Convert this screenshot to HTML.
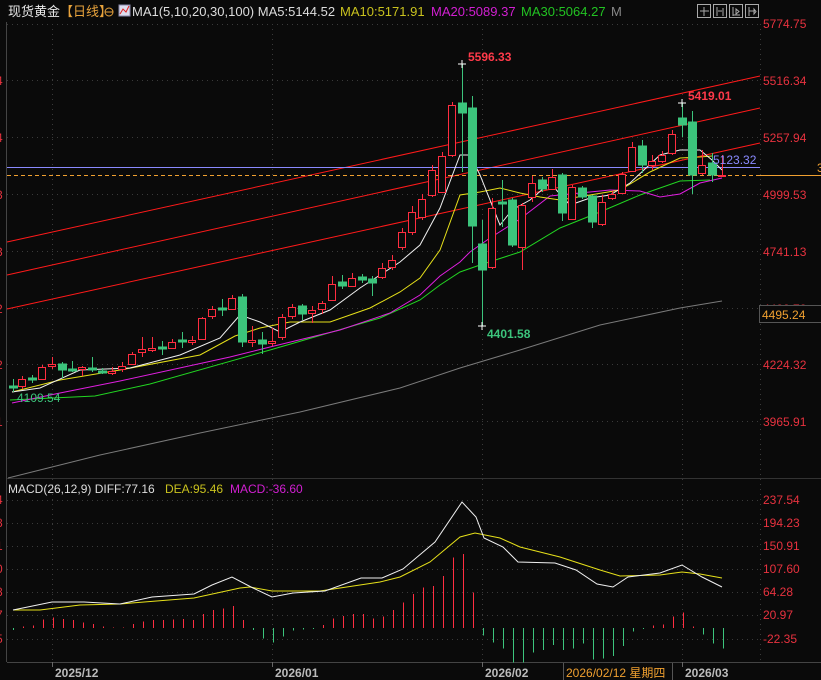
<!DOCTYPE html>
<html><head><meta charset="utf-8"><style>
html,body{margin:0;padding:0;background:#0a0a0a;width:821px;height:680px;overflow:hidden}
svg{display:block}
text{font-family:"Liberation Sans","Noto Sans CJK SC",sans-serif}
</style></head><body>
<svg width="821" height="680" viewBox="0 0 821 680" xmlns="http://www.w3.org/2000/svg">
<rect width="821" height="680" fill="#0a0a0a"/>
<g stroke="#3a3a3a" stroke-dasharray="1,4" stroke-width="1">
<line x1="7" y1="24.5" x2="760" y2="24.5"/><line x1="7" y1="80.5" x2="760" y2="80.5"/><line x1="7" y1="137.5" x2="760" y2="137.5"/><line x1="7" y1="194.5" x2="760" y2="194.5"/><line x1="7" y1="251.5" x2="760" y2="251.5"/><line x1="7" y1="308.5" x2="760" y2="308.5"/><line x1="7" y1="364.5" x2="760" y2="364.5"/><line x1="7" y1="421.5" x2="760" y2="421.5"/>
<line x1="7" y1="500.5" x2="760" y2="500.5"/><line x1="7" y1="523.5" x2="760" y2="523.5"/><line x1="7" y1="546.5" x2="760" y2="546.5"/><line x1="7" y1="569.5" x2="760" y2="569.5"/><line x1="7" y1="592.5" x2="760" y2="592.5"/><line x1="7" y1="615.5" x2="760" y2="615.5"/><line x1="7" y1="639.5" x2="760" y2="639.5"/>
<line x1="52.5" y1="24" x2="52.5" y2="662"/><line x1="272.5" y1="24" x2="272.5" y2="662"/><line x1="482.5" y1="24" x2="482.5" y2="662"/><line x1="682.5" y1="24" x2="682.5" y2="662"/><line x1="760.5" y1="24" x2="760.5" y2="662"/>
</g>
<line x1="6.5" y1="22" x2="6.5" y2="662" stroke="#444"/>
<line x1="7" y1="478.5" x2="821" y2="478.5" stroke="#333"/>
<line x1="7" y1="662.5" x2="821" y2="662.5" stroke="#444"/>

<text x="8" y="16" font-size="13" fill="#e8e8e8">现货黄金</text>
<text x="60" y="16" font-size="13" fill="#e8a33c">【日线】</text>
<circle cx="109" cy="12" r="4" fill="none" stroke="#e8a33c"/><line x1="105" y1="12" x2="113" y2="12" stroke="#e8a33c"/>
<rect x="119" y="5" width="11" height="11" fill="#dde" stroke="#88a"/><polyline points="120,14 123,9 126,12 129,6" fill="none" stroke="#d22"/>
<text x="132" y="16" font-size="13" fill="#ddd">MA1(5,10,20,30,100) MA5:5144.52</text>
<text x="340" y="16" font-size="13" fill="#c9c21e">MA10:5171.91</text>
<text x="431" y="16" font-size="13" fill="#d21fd2">MA20:5089.37</text>
<text x="521" y="16" font-size="13" fill="#22c322">MA30:5064.27</text>
<text x="611" y="16" font-size="13" fill="#888">M</text>
<g fill="none" stroke="#aaa">
<rect x="697.5" y="4.5" width="13" height="13"/><rect x="713.5" y="4.5" width="13" height="13"/><rect x="729.5" y="4.5" width="13" height="13"/><rect x="745.5" y="4.5" width="13" height="13"/>
<path d="M704 7v9M700 11h9M717 7v9M723 8v8M718 11h4M733 7v9M733 15h7M736 9v5l3-2.5zM749 7v9M749 11h6M754 9v5l2-2.5z"/>
</g>

<g font-size="12" fill="#e8323f">
<text x="763" y="28">5774.75</text><text x="763" y="85">5516.34</text><text x="763" y="142">5257.94</text><text x="763" y="199">4999.53</text><text x="763" y="256">4741.13</text><text x="763" y="313">4482.72</text><text x="763" y="369">4224.32</text><text x="763" y="426">3965.91</text>
<text x="763" y="504">237.54</text><text x="763" y="527">194.23</text><text x="763" y="550">150.91</text><text x="763" y="573">107.60</text><text x="763" y="596">64.28</text><text x="763" y="619">20.97</text><text x="763" y="643">-22.35</text>
<text x="-4" y="85">4</text><text x="-4" y="142">4</text><text x="-4" y="199">3</text><text x="-4" y="256">3</text><text x="-4" y="313">2</text><text x="-4" y="369">2</text><text x="-4" y="426">1</text>
<text x="-4" y="527">8</text><text x="-4" y="550">1</text><text x="-4" y="573">0</text><text x="-4" y="596">8</text><text x="-4" y="619">7</text><text x="-4" y="643">5</text><text x="-4" y="504">4</text>
</g>
<rect x="759.5" y="305.5" width="62" height="17" fill="#0a0a0a" stroke="#555"/>
<text x="762" y="319" font-size="12" fill="#f0a030">4495.24</text>

<g stroke="#ff1a1a" stroke-width="1">
<line x1="7" y1="242" x2="760" y2="76"/><line x1="7" y1="275" x2="760" y2="108"/><line x1="7" y1="309" x2="760" y2="143"/>
</g>
<line x1="7" y1="167.5" x2="760" y2="167.5" stroke="#8a8aff"/>
<line x1="7" y1="175.5" x2="760" y2="175.5" stroke="#f0a030" stroke-dasharray="4,3"/>
<line x1="760" y1="175.5" x2="821" y2="175.5" stroke="#f0a030"/>
<text x="817" y="172" font-size="12" fill="#f0a030">3</text>

<g fill="none" stroke-width="1">
<polyline stroke="#7a7a7a" points="8,478 100,455 200,433 300,412 400,388 460,368 520,350 600,325 680,308 722,301"/>
<polyline stroke="#22d622" points="10,400 95,396 150,384 270,350 380,318 420,300 440,285 460,272 480,265 520,252 560,228 600,212 640,195 680,181 710,180"/>
<polyline stroke="#e01fe0" points="12,403 60,393 120,381 230,357 270,347 340,330 390,313 420,295 440,276 460,262 470,252 490,238 520,219 550,196 580,193 610,190 640,191 660,197 680,194 700,183 722,178"/>
<polyline stroke="#e6e01a" points="12,392 60,380 120,370 200,355 235,336 260,328 290,322 330,322 370,308 400,292 420,278 440,250 460,195 480,192 500,188 520,193 540,197 560,200 590,195 620,190 650,172 680,158 700,157 712,156"/>
<polyline stroke="#f0f0f0" points="12,392 40,388 80,370 130,368 180,355 220,338 240,315 260,322 280,332 300,322 330,310 360,288 400,262 420,245 440,208 460,155 470,155 480,175 500,225 512,210 530,200 550,183 570,205 590,198 610,195 630,183 660,155 680,150 700,150 712,160 722,170"/>
</g>

<g stroke="#3cc47c" fill="#3cc47c">
<line x1="13.5" y1="379" x2="13.5" y2="392"/><rect x="9.5" y="386" width="8" height="2"/>
<line x1="32.5" y1="375" x2="32.5" y2="383"/><rect x="28.5" y="378" width="8" height="2"/>
<line x1="62.5" y1="362" x2="62.5" y2="378"/><rect x="58.5" y="364" width="8" height="6"/>
<line x1="72.5" y1="361" x2="72.5" y2="372"/><rect x="68.5" y="369" width="8" height="2"/>
<line x1="92.5" y1="357" x2="92.5" y2="372"/><rect x="88.5" y="368" width="8" height="2"/>
<line x1="102.5" y1="368" x2="102.5" y2="374"/><rect x="98.5" y="371" width="8" height="2"/>
<line x1="162.5" y1="341" x2="162.5" y2="355"/><rect x="158.5" y="347" width="8" height="2"/>
<line x1="182.5" y1="332" x2="182.5" y2="348"/><rect x="178.5" y="340" width="8" height="2"/>
<line x1="222.5" y1="299" x2="222.5" y2="316"/><rect x="218.5" y="308" width="8" height="2"/>
<line x1="242.5" y1="294" x2="242.5" y2="347"/><rect x="238.5" y="297" width="8" height="45"/>
<line x1="262.5" y1="332" x2="262.5" y2="354"/><rect x="258.5" y="340" width="8" height="4"/>
<line x1="302.5" y1="304" x2="302.5" y2="320"/><rect x="298.5" y="306" width="8" height="8"/>
<line x1="342.5" y1="275" x2="342.5" y2="289"/><rect x="338.5" y="282" width="8" height="4"/>
<line x1="362.5" y1="274" x2="362.5" y2="283"/><rect x="358.5" y="277" width="8" height="3"/>
<line x1="372.5" y1="276" x2="372.5" y2="296"/><rect x="368.5" y="279" width="8" height="4"/>
<line x1="462.5" y1="64" x2="462.5" y2="172"/><rect x="458.5" y="103" width="8" height="10"/>
<line x1="472.5" y1="96" x2="472.5" y2="263"/><rect x="468.5" y="108" width="8" height="118"/>
<line x1="482.5" y1="220" x2="482.5" y2="326"/><rect x="478.5" y="244" width="8" height="26"/>
<line x1="502.5" y1="180" x2="502.5" y2="227"/><rect x="498.5" y="202" width="8" height="2"/>
<line x1="512.5" y1="198" x2="512.5" y2="247"/><rect x="508.5" y="200" width="8" height="45"/>
<line x1="542.5" y1="177" x2="542.5" y2="192"/><rect x="538.5" y="180" width="8" height="9"/>
<line x1="562.5" y1="173" x2="562.5" y2="221"/><rect x="558.5" y="175" width="8" height="38"/>
<line x1="582.5" y1="186" x2="582.5" y2="199"/><rect x="578.5" y="188" width="8" height="9"/>
<line x1="592.5" y1="195" x2="592.5" y2="228"/><rect x="588.5" y="196" width="8" height="26"/>
<line x1="642.5" y1="140" x2="642.5" y2="173"/><rect x="638.5" y="146" width="8" height="19"/>
<line x1="682.5" y1="103" x2="682.5" y2="137"/><rect x="678.5" y="118" width="8" height="7"/>
<line x1="692.5" y1="111" x2="692.5" y2="194"/><rect x="688.5" y="122" width="8" height="53"/>
<line x1="712.5" y1="153" x2="712.5" y2="182"/><rect x="708.5" y="163" width="8" height="12"/>
</g>
<g stroke="#ff2d40" fill="#0a0a0a">
<line x1="22.5" y1="376" x2="22.5" y2="389"/><rect x="18.5" y="379.5" width="7" height="7"/>
<line x1="42.5" y1="365" x2="42.5" y2="380"/><rect x="38.5" y="367.5" width="7" height="12"/>
<line x1="52.5" y1="357" x2="52.5" y2="369"/><rect x="48.5" y="364.5" width="7" height="2"/>
<line x1="82.5" y1="366" x2="82.5" y2="376"/><rect x="78.5" y="367.5" width="7" height="2"/>
<line x1="112.5" y1="367" x2="112.5" y2="375"/><rect x="108.5" y="371.5" width="7" height="2"/>
<line x1="122.5" y1="362" x2="122.5" y2="372"/><rect x="118.5" y="366.5" width="7" height="3"/>
<line x1="132.5" y1="352" x2="132.5" y2="365"/><rect x="128.5" y="354.5" width="7" height="10"/>
<line x1="142.5" y1="337" x2="142.5" y2="357"/><rect x="138.5" y="349.5" width="7" height="3"/>
<line x1="152.5" y1="337" x2="152.5" y2="352"/><rect x="148.5" y="348.5" width="7" height="2"/>
<line x1="172.5" y1="339" x2="172.5" y2="349"/><rect x="168.5" y="342.5" width="7" height="6"/>
<line x1="192.5" y1="336" x2="192.5" y2="345"/><rect x="188.5" y="340.5" width="7" height="2"/>
<line x1="202.5" y1="317" x2="202.5" y2="340"/><rect x="198.5" y="318.5" width="7" height="21"/>
<line x1="212.5" y1="306" x2="212.5" y2="319"/><rect x="208.5" y="309.5" width="7" height="7"/>
<line x1="232.5" y1="295" x2="232.5" y2="310"/><rect x="228.5" y="298.5" width="7" height="11"/>
<line x1="252.5" y1="326" x2="252.5" y2="347"/><rect x="248.5" y="340.5" width="7" height="2"/>
<line x1="272.5" y1="328" x2="272.5" y2="346"/><rect x="268.5" y="341.5" width="7" height="2"/>
<line x1="282.5" y1="314" x2="282.5" y2="340"/><rect x="278.5" y="317.5" width="7" height="20"/>
<line x1="292.5" y1="304" x2="292.5" y2="319"/><rect x="288.5" y="307.5" width="7" height="9"/>
<line x1="312.5" y1="306" x2="312.5" y2="323"/><rect x="308.5" y="310.5" width="7" height="3"/>
<line x1="322.5" y1="301" x2="322.5" y2="314"/><rect x="318.5" y="303.5" width="7" height="6"/>
<line x1="332.5" y1="276" x2="332.5" y2="301"/><rect x="328.5" y="284.5" width="7" height="16"/>
<line x1="352.5" y1="273" x2="352.5" y2="287"/><rect x="348.5" y="278.5" width="7" height="8"/>
<line x1="382.5" y1="263" x2="382.5" y2="279"/><rect x="378.5" y="268.5" width="7" height="9"/>
<line x1="392.5" y1="255" x2="392.5" y2="270"/><rect x="388.5" y="260.5" width="7" height="7"/>
<line x1="402.5" y1="228" x2="402.5" y2="250"/><rect x="398.5" y="232.5" width="7" height="15"/>
<line x1="412.5" y1="206" x2="412.5" y2="235"/><rect x="408.5" y="212.5" width="7" height="20"/>
<line x1="422.5" y1="194" x2="422.5" y2="220"/><rect x="418.5" y="199.5" width="7" height="18"/>
<line x1="432.5" y1="165" x2="432.5" y2="197"/><rect x="428.5" y="170.5" width="7" height="25"/>
<line x1="442.5" y1="152" x2="442.5" y2="193"/><rect x="438.5" y="156.5" width="7" height="36"/>
<line x1="452.5" y1="102" x2="452.5" y2="157"/><rect x="448.5" y="105.5" width="7" height="50"/>
<line x1="492.5" y1="198" x2="492.5" y2="269"/><rect x="488.5" y="208.5" width="7" height="59"/>
<line x1="522.5" y1="203" x2="522.5" y2="270"/><rect x="518.5" y="205.5" width="7" height="42"/>
<line x1="532.5" y1="176" x2="532.5" y2="202"/><rect x="528.5" y="183.5" width="7" height="14"/>
<line x1="552.5" y1="169" x2="552.5" y2="190"/><rect x="548.5" y="177.5" width="7" height="12"/>
<line x1="572.5" y1="185" x2="572.5" y2="220"/><rect x="568.5" y="187.5" width="7" height="32"/>
<line x1="602.5" y1="195" x2="602.5" y2="226"/><rect x="598.5" y="202.5" width="7" height="22"/>
<line x1="612.5" y1="191" x2="612.5" y2="200"/><rect x="608.5" y="194.5" width="7" height="4"/>
<line x1="622.5" y1="172" x2="622.5" y2="194"/><rect x="618.5" y="174.5" width="7" height="19"/>
<line x1="632.5" y1="142" x2="632.5" y2="172"/><rect x="628.5" y="147.5" width="7" height="24"/>
<line x1="652.5" y1="155" x2="652.5" y2="170"/><rect x="648.5" y="161.5" width="7" height="4"/>
<line x1="662.5" y1="151" x2="662.5" y2="163"/><rect x="658.5" y="155.5" width="7" height="6"/>
<line x1="672.5" y1="130" x2="672.5" y2="155"/><rect x="668.5" y="134.5" width="7" height="19"/>
<line x1="702.5" y1="150" x2="702.5" y2="175"/><rect x="698.5" y="165.5" width="7" height="8"/>
<line x1="722.5" y1="155" x2="722.5" y2="177"/><rect x="718.5" y="175.5" width="7" height="1"/>
</g>
<g stroke="#fff"><path d="M458 64h8M462 60v8M678 103h8M682 99v8M478 326h8M482 322v8"/></g>
<text x="468" y="61" font-size="12" font-weight="bold" fill="#ff3a4a">5596.33</text>
<text x="688" y="100" font-size="12" font-weight="bold" fill="#ff3a4a">5419.01</text>
<text x="487" y="338" font-size="12" font-weight="bold" fill="#3cc47c">4401.58</text>
<text x="17" y="402" font-size="12" fill="#3cc47c">4109.54</text>
<text x="713" y="164" font-size="12" fill="#8a8aff">5123.32</text>

<text x="8" y="493" font-size="12" fill="#ddd">MACD(26,12,9) DIFF:77.16</text>
<text x="165" y="493" font-size="12" fill="#c9c21e">DEA:95.46</text>
<text x="230" y="493" font-size="12" fill="#d21fd2">MACD:-36.60</text>
<g stroke="#ff2d40" stroke-width="1" shape-rendering="crispEdges">
<path d="M23.5 628V626.7M33.5 628V625.7M43.5 628V619.3M53.5 628V617.3M63.5 628V619M73.5 628V620M83.5 628V622.3M93.5 628V624M103.5 628V626.7M113.5 628V627.3M123.5 628V627.3M133.5 628V624M143.5 628V621.7M153.5 628V620M163.5 628V620M173.5 628V619.3M183.5 628V619M193.5 628V620M203.5 628V614M213.5 628V610M223.5 628V608.3M233.5 628V606M243.5 628V620M323.5 628V625M333.5 628V618.3M343.5 628V616M353.5 628V614M363.5 628V614M373.5 628V618.3M383.5 628V616.7M393.5 628V610M403.5 628V602.7M413.5 628V594M423.5 628V587.3M433.5 628V586M443.5 628V576M453.5 628V557.3M463.5 628V554M473.5 628V592.7M653.5 628V625.7M663.5 628V624.3M673.5 628V616.7M683.5 628V612.7M693.5 628V626.7"/>
</g>
<g stroke="#3cc47c" stroke-width="1" shape-rendering="crispEdges">
<path d="M13.5 628V630M253.5 628V630M263.5 628V638.3M273.5 628V642.7M283.5 628V636.7M293.5 628V630.7M303.5 628V629.3M313.5 628V629M483.5 628V635.7M493.5 628V642.7M503.5 628V648.3M513.5 628V662.7M523.5 628V662.7M533.5 628V652.7M543.5 628V650M553.5 628V645M563.5 628V650M573.5 628V648.3M583.5 628V643.3M593.5 628V659.3M603.5 628V658.3M613.5 628V656M623.5 628V646M633.5 628V631.7M643.5 628V629M703.5 628V634.3M713.5 628V643.3M723.5 628V648.3"/>
</g>
<g fill="none" stroke-width="1">
<polyline stroke="#e6e01a" points="13,610 40,610 80,605 120,604 194,598 240,588 250,587 272,591 320,591 380,582 400,577 430,562 460,537 475,533 500,538 520,547 560,557 600,570 620,576 660,575 682,572 700,574 722,578"/>
<polyline stroke="#f0f0f0" points="13,610 52,602 84,602 120,604 152,597 194,594 212,585 232,577 251,587 272,597 293,593 325,591 361,578 382,578 403,569 435,542 462,502 476,517 484,538 503,547 518,562 555,563 576,570 597,584 613,587 628,577 660,573 682,565 702,577 722,587"/>
</g>

<g stroke="#666"><path d="M52.5 662v5M272.5 662v5M482.5 662v5M682.5 662v5"/></g>
<g font-size="12" font-weight="bold" fill="#bbb">
<text x="55" y="677">2025/12</text><text x="275" y="677">2026/01</text><text x="485" y="677">2026/02</text><text x="685" y="677">2026/03</text>
</g>
<rect x="563" y="663" width="110" height="17" fill="#0a0a0a"/>
<line x1="563.5" y1="663" x2="563.5" y2="680" stroke="#555"/><line x1="672.5" y1="663" x2="672.5" y2="680" stroke="#555"/>
<text x="566" y="677" font-size="12" fill="#f0a030">2026/02/12 星期四</text>
</svg>
</body></html>
